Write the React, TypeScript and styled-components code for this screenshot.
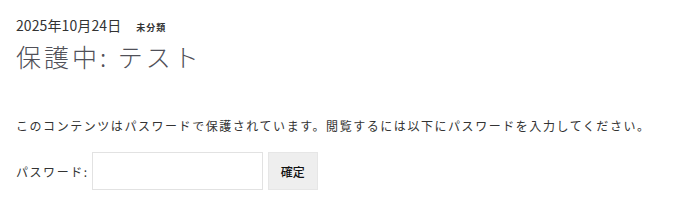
import React from 'react'
import styled, { createGlobalStyle } from 'styled-components'

const GlobalStyle = createGlobalStyle`
  body {
    margin: 0;
    background: #ffffff;
    font-family: "Noto Sans CJK JP", "Noto Sans", sans-serif;
    color: #333333;
  }
`

const Article = styled.article`
  padding: 15px 16px 0 16px;
`

const Meta = styled.div`
  display: flex;
  align-items: baseline;
  gap: 15px;
  height: 22px;
`

const PostDate = styled.span`
  font-size: 14px;
  color: #333333;
  letter-spacing: 0.1px;
`

const Category = styled.span`
  font-size: 9px;
  font-weight: 700;
  color: #333333;
  letter-spacing: 1px;
`

const Title = styled.h1`
  margin: 1px 0 0 0;
  font-size: 25px;
  font-weight: 300;
  line-height: 36px;
  color: #505058;
  letter-spacing: 3px;
`

const Notice = styled.p`
  margin: 43px 0 0 0;
  font-size: 12px;
  line-height: 18px;
  letter-spacing: 1.55px;
  color: #333333;
`

const PasswordForm = styled.form`
  display: flex;
  align-items: center;
  margin-top: 17px;
`

const Label = styled.label`
  font-size: 12px;
  letter-spacing: 1.55px;
  color: #333333;
  margin-right: 3px;
`

const PasswordInput = styled.input`
  box-sizing: border-box;
  width: 171px;
  height: 38px;
  border: 1px solid #e2e2e2;
  background: #ffffff;
  padding: 0 8px;
  outline: none;
`

const SubmitButton = styled.button`
  box-sizing: border-box;
  margin-left: 5px;
  width: 50px;
  height: 38px;
  border: 1px solid #e6e6e6;
  background: #eeeeee;
  font-family: "Noto Sans CJK JP", sans-serif;
  font-size: 12px;
  font-weight: 500;
  color: #111111;
  cursor: pointer;
`

export default function App() {
  return (
    <>
      <GlobalStyle />
      <Article>
        <Meta>
          <PostDate>2025年10月24日</PostDate>
          <Category>未分類</Category>
        </Meta>
        <Title>保護中: テスト</Title>
        <Notice>
          このコンテンツはパスワードで保護されています。閲覧するには以下にパスワードを入力してください。
        </Notice>
        <PasswordForm onSubmit={(e) => e.preventDefault()}>
          <Label htmlFor="pwbox">パスワード:</Label>
          <PasswordInput id="pwbox" type="password" />
          <SubmitButton type="submit">確定</SubmitButton>
        </PasswordForm>
      </Article>
    </>
  )
}
